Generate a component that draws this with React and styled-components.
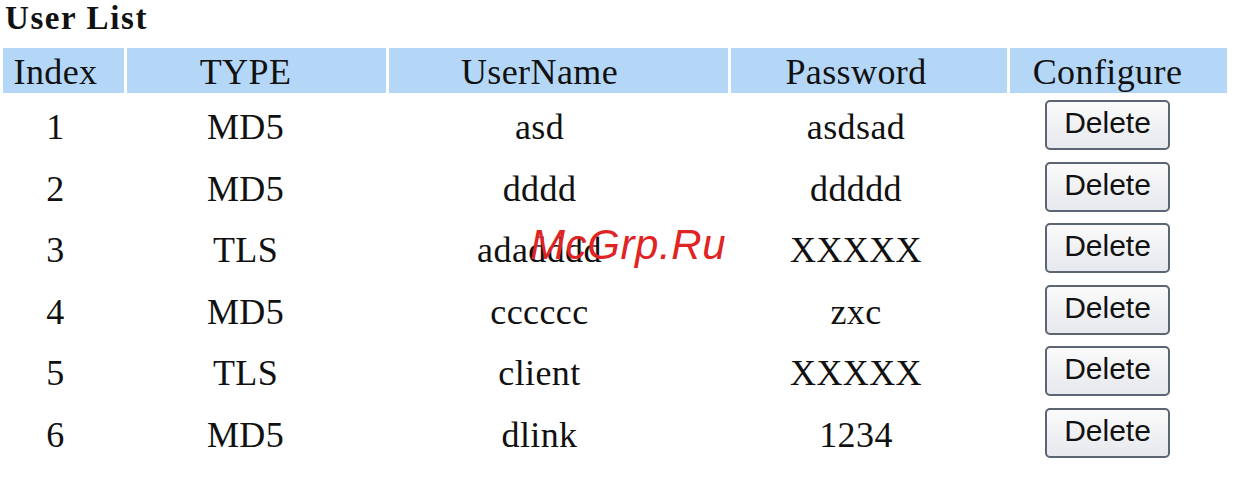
import React from "react";
import styled, { createGlobalStyle } from "styled-components";

const Global = createGlobalStyle`
  html, body { margin: 0; padding: 0; background: #fff; }
  body { font-family: "Liberation Serif", "Times New Roman", serif; color: #111; }
`;

const Page = styled.div`
  position: relative;
  width: 1244px;
  height: 490px;
  padding: 0 0 0 3px;
  box-sizing: border-box;
`;

const Title = styled.h1`
  margin: 0;
  padding: 0 0 0 2px;
  height: 48px;
  font-family: "Liberation Serif", "Times New Roman", serif;
  font-weight: bold;
  font-size: 33px;
  letter-spacing: 1.6px;
  line-height: 36px;
  color: #111;
`;

const Grid = styled.div`
  display: grid;
  grid-template-columns: 121px 259px 339px 276px 217px;
  grid-template-rows: 45px;
  grid-auto-rows: 58.5px;
  column-gap: 3px;
  row-gap: 3px;
`;

const shifts = [16, 22, 38, 26, 22];

const HeadCell = styled.div`
  background: #b4d7f8;
  display: flex;
  align-items: center;
  justify-content: center;
  font-size: 36px;
  letter-spacing: 0.4px;
  line-height: 1;
  padding-top: 2px;
  padding-right: ${(p) => p.$shift}px;
`;

const Cell = styled.div`
  display: flex;
  align-items: center;
  justify-content: center;
  font-size: 36px;
  letter-spacing: 0.4px;
  line-height: 1;
  padding-top: ${(p) => (p.$btn ? "0px" : "4px")};
  padding-right: ${(p) => p.$shift}px;
  box-sizing: border-box;
`;

const Button = styled.button`
  width: 125px;
  height: 50px;
  border: 2px solid #5b6672;
  border-radius: 5px;
  background: linear-gradient(#fbfbfb, #eeeff2 60%, #e6e9ee);
  font-family: "Liberation Sans", Arial, sans-serif;
  font-size: 30px;
  color: #111;
  padding: 0 0 4px;
  cursor: pointer;
`;

const Watermark = styled.div`
  position: absolute;
  left: 530px;
  top: 221px;
  font-family: "Liberation Sans", Arial, sans-serif;
  font-style: italic;
  font-size: 42px;
  letter-spacing: 0.6px;
  color: #e02424;
  pointer-events: none;
`;

const rows = [
  ["1", "MD5", "asd", "asdsad"],
  ["2", "MD5", "dddd", "ddddd"],
  ["3", "TLS", "adadddd", "XXXXX"],
  ["4", "MD5", "cccccc", "zxc"],
  ["5", "TLS", "client", "XXXXX"],
  ["6", "MD5", "dlink", "1234"],
];

export default function App() {
  return (
    <Page>
      <Global />
      <Title>User List</Title>
      <Grid>
        {["Index", "TYPE", "UserName", "Password", "Configure"].map((h, i) => (
          <HeadCell key={h} $shift={shifts[i]}>
            {h}
          </HeadCell>
        ))}
        {rows.map((r) => (
          <React.Fragment key={r[0]}>
            {r.map((v, i) => (
              <Cell key={i} $shift={shifts[i]}>
                {v}
              </Cell>
            ))}
            <Cell $btn $shift={shifts[4]}>
              <Button>Delete</Button>
            </Cell>
          </React.Fragment>
        ))}
      </Grid>
      <Watermark>McGrp.Ru</Watermark>
    </Page>
  );
}
